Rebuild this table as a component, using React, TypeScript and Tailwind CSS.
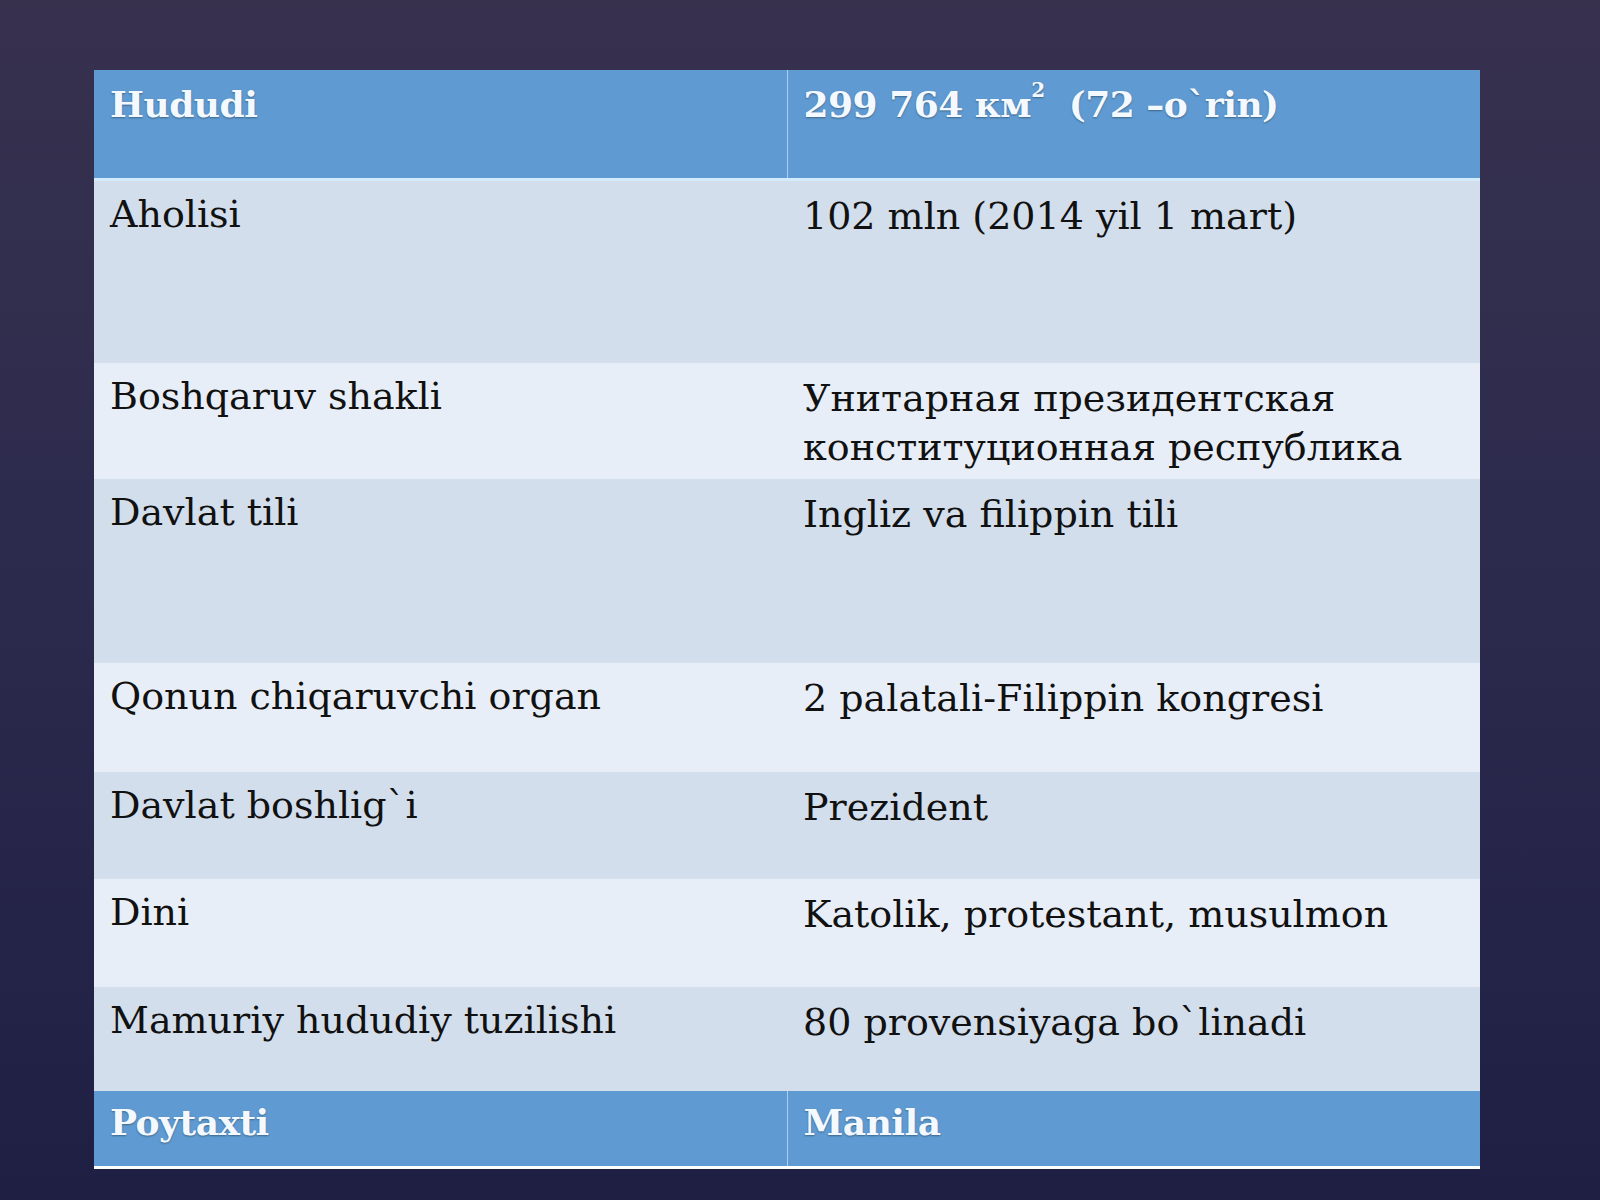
const rows = [
  { label: "Aholisi", value: "102 mln (2014 yil 1 mart)", h: "h-[184px]", bg: "bg-[#d3deec]" },
  { label: "Boshqaruv shakli", value: "Унитарная президентская конституционная республика", h: "h-[116px]", bg: "bg-[#e8eef7]" },
  { label: "Davlat tili", value: "Ingliz va filippin tili", h: "h-[184px]", bg: "bg-[#d3deec]" },
  { label: "Qonun chiqaruvchi organ", value: "2 palatali-Filippin kongresi", h: "h-[109px]", bg: "bg-[#e8eef7]" },
  { label: "Davlat boshlig`i", value: "Prezident", h: "h-[107px]", bg: "bg-[#d3deec]" },
  { label: "Dini", value: "Katolik, protestant, musulmon", h: "h-[108px]", bg: "bg-[#e8eef7]" },
  { label: "Mamuriy hududiy tuzilishi", value: "80 provensiyaga bo`linadi", h: "h-[104px]", bg: "bg-[#d3deec]" },
];

export default function App() {
  return (
    <div className="min-h-[1200px] w-full bg-gradient-to-b from-[#37314e] via-[#2b2a4d] to-[#1f1f44] pt-[70px] pl-[94px] font-['DejaVu_Serif',serif]">
      <table className="w-[1386px] table-fixed border-collapse text-[38px] leading-[1.2]">
        <colgroup>
          <col className="w-[693px]" />
          <col className="w-[693px]" />
        </colgroup>
        <thead>
          <tr className="h-[109px] bg-[#5f9bd2] align-top border-b-[3px] border-[#d4ebfb] text-[36px] tracking-[-0.5px]">
            <th className="pl-4 pt-[13px] text-left font-bold text-[#f4f9ff] [text-shadow:0_1px_2px_rgba(0,0,0,0.35)]">
              Hududi
            </th>
            <th className="pl-4 pt-[13px] text-left font-bold text-[#f4f9ff] border-l border-[#a9d0f0] [text-shadow:0_1px_2px_rgba(0,0,0,0.35)]">
              299 764 км<sup className="text-[20px] align-[10px]">2</sup>&nbsp; (72 –o`rin)
            </th>
          </tr>
        </thead>
        <tbody>
          {rows.map((r) => (
            <tr key={r.label} className={`${r.h} ${r.bg} align-top`}>
              <td className="pl-4 pt-[11px] text-[#111111]">{r.label}</td>
              <td className="pl-4 pt-[11px] pr-4 text-[#111111] leading-[49px]">{r.value}</td>
            </tr>
          ))}
          <tr className="h-[76px] bg-[#5f9bd2] align-top border-b-[3px] border-white text-[36px] tracking-[-0.5px]">
            <td className="pl-4 pt-[10px] font-bold text-[#f4f9ff] [text-shadow:0_1px_2px_rgba(0,0,0,0.35)]">Poytaxti</td>
            <td className="pl-4 pt-[10px] font-bold text-[#f4f9ff] border-l border-[#a9d0f0] [text-shadow:0_1px_2px_rgba(0,0,0,0.35)]">
              Manila
            </td>
          </tr>
        </tbody>
      </table>
    </div>
  );
}
